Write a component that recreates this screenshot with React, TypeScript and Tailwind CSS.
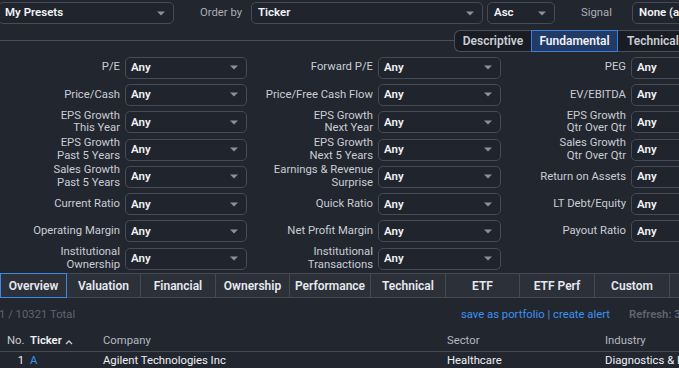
import React from "react";

const Caret = () => (
  <svg width="8" height="5" viewBox="0 0 8 5" className="shrink-0">
    <path d="M0 0.5 L8 0.5 L4 4.5 Z" fill="#8b909a" />
  </svg>
);

const Select = ({ value, className = "" }: { value: string; className?: string }) => (
  <div
    className={
      "flex shrink-0 items-center justify-between h-[22px] rounded-[5px] border border-[#464b56] bg-[#20242c] pl-[5px] pr-[8px] text-[11.5px] font-semibold text-[#f1f3f6] overflow-hidden " +
      className
    }
  >
    <span className="whitespace-nowrap">{value}</span>
    <Caret />
  </div>
);

type Cell = [string?, string?];
const rows: Cell[][] = [
  [["P/E"], ["Forward P/E"], ["PEG"]],
  [["Price/Cash"], ["Price/Free Cash Flow"], ["EV/EBITDA"]],
  [["EPS Growth", "This Year"], ["EPS Growth", "Next Year"], ["EPS Growth", "Qtr Over Qtr"]],
  [["EPS Growth", "Past 5 Years"], ["EPS Growth", "Next 5 Years"], ["Sales Growth", "Qtr Over Qtr"]],
  [["Sales Growth", "Past 5 Years"], ["Earnings & Revenue", "Surprise"], ["Return on Assets"]],
  [["Current Ratio"], ["Quick Ratio"], ["LT Debt/Equity"]],
  [["Operating Margin"], ["Net Profit Margin"], ["Payout Ratio"]],
  [["Institutional", "Ownership"], ["Institutional", "Transactions"], []],
];

const tabs = ["Overview", "Valuation", "Financial", "Ownership", "Performance", "Technical", "ETF", "ETF Perf", "Custom", ""];
const tabWidths = ["w-[67px]", "w-[74px]", "w-[75px]", "w-[74px]", "w-[81px]", "w-[75px]", "w-[74px]", "w-[75px]", "w-[75px]", "w-[40px]"];

export default function App() {
  return (
    <div
      className="w-[679px] h-[368px] overflow-hidden bg-[#22262f] text-[#c9cdd4] text-[11.3px]"
      style={{ fontFamily: "Roboto, 'Liberation Sans', Arial, sans-serif" }}
    >
      {/* top bar */}
      <div className="flex items-center h-[26px] whitespace-nowrap">
        <Select value="My Presets" className="w-[176px] ml-[-2px] pl-[6px]" />
        <span className="shrink-0 ml-[26px] w-[44px] text-[#a9aeb8]">Order by</span>
        <Select value="Ticker" className="w-[232px] ml-[7px] pl-[6px]" />
        <Select value="Asc" className="w-[68px] ml-[4px] pl-[6px]" />
        <span className="shrink-0 ml-[26px] w-[33px] text-[#a9aeb8]">Signal</span>
        <Select value="None (all stocks)" className="w-[120px] ml-[18px] pl-[6px]" />
      </div>

      {/* second row: line + tabs */}
      <div className="flex items-center h-[25px] mt-[2px]">
        <div className="flex-1 h-px bg-[#4a4f5a]" />
        <div className="flex h-[22px] rounded-l-[6px] border border-r-0 border-[#4a4f5a] bg-[#191c23] text-[12px] font-semibold shrink-0">
          <div className="w-[76px] flex items-center justify-center text-[#c9cdd4]">Descriptive</div>
          <div className="w-[87px] flex items-center justify-center bg-[#213a66] border border-[#3b7fd9] text-[#eef2f8] my-[-1px]">
            Fundamental
          </div>
          <div className="w-[61px] flex items-center pl-[9px] text-[#c9cdd4] whitespace-nowrap">Technical</div>
        </div>
      </div>

      {/* filter grid */}
      <div className="grid grid-cols-[125px_122px_131px_123px_130px_124px] auto-rows-[27.3px] mt-[1px] w-[755px]">
        {rows.map((r, ri) =>
          [0, 1, 2].map((ci) => {
            const c = r[ci] || [];
            return (
              <React.Fragment key={ri + "-" + ci}>
                <div className="flex flex-col items-end justify-center pr-[5px] leading-[12.5px] text-right text-[#c9cdd4] whitespace-nowrap">
                  {c[0] && <span>{c[0]}</span>}
                  {c[1] && <span>{c[1]}</span>}
                </div>
                <div className="flex items-center">
                  {c[0] ? <Select value="Any" className="w-full" /> : null}
                </div>
              </React.Fragment>
            );
          })
        )}
      </div>

      {/* tabs */}
      <div className="flex h-[25px] mt-[1px] bg-[#2c3039] border-y border-[#444953] text-[12px] font-semibold text-[#e6e9ee] whitespace-nowrap">
        {tabs.map((t, i) => (
          <div
            key={i}
            className={
              "shrink-0 flex items-center justify-center " +
              tabWidths[i] +
              (i === 0 ? " border border-[#3b8ae6] my-[-1px]" : " border-r border-[#444953]")
            }
          >
            {t}
          </div>
        ))}
      </div>

      {/* info line */}
      <div className="flex items-center h-[30px] mt-[2px] whitespace-nowrap">
        <span className="shrink-0 ml-[-1px] text-[#5f6570]">1 / 10321 Total</span>
        <span className="shrink-0 ml-auto text-[#3d92f0]">save as portfolio | create alert</span>
        <span className="shrink-0 ml-[19px] mr-[-40px] w-[90px] text-[#5f6570] font-semibold">Refresh: 3min</span>
      </div>

      {/* table header */}
      <div className="flex items-center h-[20px] mt-[2px] border-b border-[#444953] whitespace-nowrap">
        <span className="shrink-0 ml-[7px] w-[23px] text-[#c9cdd4]">No.</span>
        <span className="shrink-0 w-[73px] flex items-center gap-[3px] font-semibold text-[#eef0f3]">
          Ticker
          <svg width="8" height="6" viewBox="0 0 8 6">
            <path d="M1 5 L4 2 L7 5" stroke="#c9cdd4" strokeWidth="1.3" fill="none" />
          </svg>
        </span>
        <span className="shrink-0 w-[344px] text-[#b4b9c2]">Company</span>
        <span className="shrink-0 w-[158px] text-[#b4b9c2]">Sector</span>
        <span className="shrink-0 text-[#b4b9c2]">Industry</span>
      </div>

      {/* data row */}
      <div className="flex items-center h-[19px] whitespace-nowrap text-[#eef0f3]">
        <span className="shrink-0 w-[25px] text-right pr-[1px]">1</span>
        <span className="shrink-0 ml-[5px] w-[73px] text-[#3d92f0]">A</span>
        <span className="shrink-0 w-[344px]">Agilent Technologies Inc</span>
        <span className="shrink-0 w-[158px]">Healthcare</span>
        <span className="shrink-0">Diagnostics &amp; Research</span>
      </div>
    </div>
  );
}
